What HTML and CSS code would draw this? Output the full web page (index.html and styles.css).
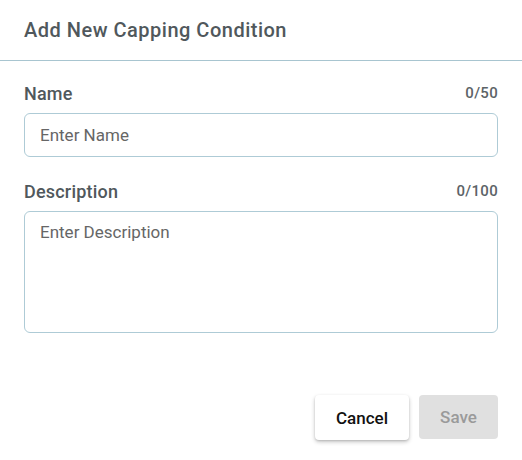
FILE: index.html
```html
<!DOCTYPE html>
<html>
<head>
<meta charset="utf-8">
<link rel="stylesheet" href="styles.css">
</head>
<body>
<div class="dialog">
  <div class="header">
    <h2 class="title">Add New Capping Condition</h2>
  </div>
  <div class="content">
    <div class="field">
      <div class="label-row">
        <label class="label">Name</label>
        <span class="counter">0/50</span>
      </div>
      <input class="input" type="text" placeholder="Enter Name">
    </div>
    <div class="field field-desc">
      <div class="label-row">
        <label class="label">Description</label>
        <span class="counter">0/100</span>
      </div>
      <textarea class="textarea" placeholder="Enter Description"></textarea>
    </div>
  </div>
  <div class="actions">
    <button class="btn btn-cancel">Cancel</button>
    <button class="btn btn-save" disabled>Save</button>
  </div>
</div>
</body>
</html>
```
FILE: styles.css
```css
* { box-sizing: border-box; }
html, body {
  margin: 0;
  padding: 0;
  background: #ffffff;
  font-family: Roboto, "Liberation Sans", sans-serif;
}
.dialog {
  width: 522px;
  height: 460px;
  background: #fff;
  border-radius: 4px;
  display: flex;
  flex-direction: column;
}
.header {
  height: 61px;
  border-bottom: 1px solid #a8c5d0;
  display: flex;
  align-items: center;
  padding: 0 24px 1px;
}
.title {
  margin: 0;
  font-size: 20px;
  font-weight: 500;
  color: #50585c;
  letter-spacing: 0.5px;
}
.content {
  padding: 22px 24px 0;
}
.field-desc {
  margin-top: 24px;
}
.label-row {
  display: flex;
  justify-content: space-between;
  align-items: center;
  height: 20px;
  margin-bottom: 10px;
}
.label {
  font-size: 18px;
  font-weight: 500;
  color: #50585c;
  letter-spacing: 0.2px;
}
.counter {
  font-size: 15px;
  font-weight: 500;
  color: #5c6367;
  letter-spacing: 0.3px;
}
.input, .textarea {
  display: block;
  width: 474px;
  border: 1px solid #aecbd6;
  border-radius: 6px;
  font-family: Roboto, "Liberation Sans", sans-serif;
  font-size: 17px;
  color: #333;
  background: #fff;
  outline: none;
}
.input {
  height: 44px;
  padding: 0 15px;
}
.textarea {
  height: 122px;
  padding: 10px 15px;
  resize: none;
  line-height: 20px;
}
.input::placeholder, .textarea::placeholder {
  color: #666666;
  opacity: 1;
}
.actions {
  display: flex;
  justify-content: flex-end;
  gap: 10px;
  padding: 62px 24px 0;
}
.btn {
  height: 45px;
  border: none;
  border-radius: 4px;
  font-family: Roboto, "Liberation Sans", sans-serif;
  font-size: 17px;
  font-weight: 500;
  padding: 0;
}
.btn-cancel {
  width: 94px;
  background: #fff;
  color: #111;
  box-shadow: 0 2px 4px rgba(0,0,0,0.22), 0 1px 2px rgba(0,0,0,0.12);
}
.btn-save {
  width: 79px;
  height: 44px;
  background: #e0e0e0;
  color: #9a9a9a;
}
```
